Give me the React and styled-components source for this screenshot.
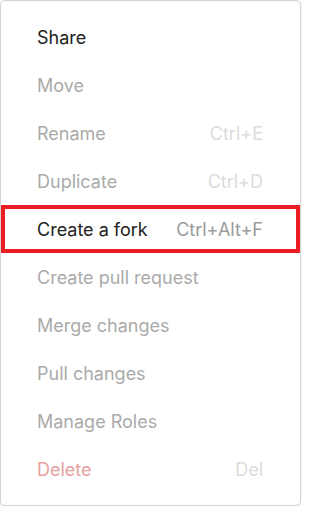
import styled, { createGlobalStyle } from "styled-components";

const Global = createGlobalStyle`
  html, body {
    margin: 0;
    padding: 0;
    background: #ffffff;
  }
  body {
    font-family: Inter, "Noto Sans", sans-serif;
  }
`;

const Menu = styled.ul`
  list-style: none;
  margin: 0;
  padding: 12px 0;
  width: 301px;
  box-sizing: border-box;
  background: #fff;
  border: 1px solid #d4d4d4;
  border-radius: 5px;
  box-shadow: 0 1px 2px rgba(0, 0, 0, 0.12);
`;

const Item = styled.li`
  display: flex;
  align-items: center;
  justify-content: space-between;
  height: 48px;
  padding: 0 37px 0 36px;
  font-size: 18px;
  color: ${({ $danger, $disabled }) =>
    $danger ? "#e8a09f" : $disabled ? "#aaaaaa" : "#222222"};
  outline: ${({ $focused }) => ($focused ? "4px solid #ec1c24" : "none")};
  outline-offset: -4px;
  cursor: default;
`;

const Shortcut = styled.span`
  color: ${({ $active }) => ($active ? "#9a9a9a" : "#dcdcdc")};
`;

const items = [
  { label: "Share" },
  { label: "Move", disabled: true },
  { label: "Rename", key: "Ctrl+E", disabled: true },
  { label: "Duplicate", key: "Ctrl+D", disabled: true },
  { label: "Create a fork", key: "Ctrl+Alt+F", focused: true },
  { label: "Create pull request", disabled: true },
  { label: "Merge changes", disabled: true },
  { label: "Pull changes", disabled: true },
  { label: "Manage Roles", disabled: true },
  { label: "Delete", key: "Del", danger: true, disabled: true },
];

export default function App() {
  return (
    <>
      <Global />
      <Menu>
        {items.map((it) => (
          <Item
            key={it.label}
            $disabled={it.disabled}
            $danger={it.danger}
            $focused={it.focused}
          >
            <span>{it.label}</span>
            {it.key && <Shortcut $active={!it.disabled}>{it.key}</Shortcut>}
          </Item>
        ))}
      </Menu>
    </>
  );
}
